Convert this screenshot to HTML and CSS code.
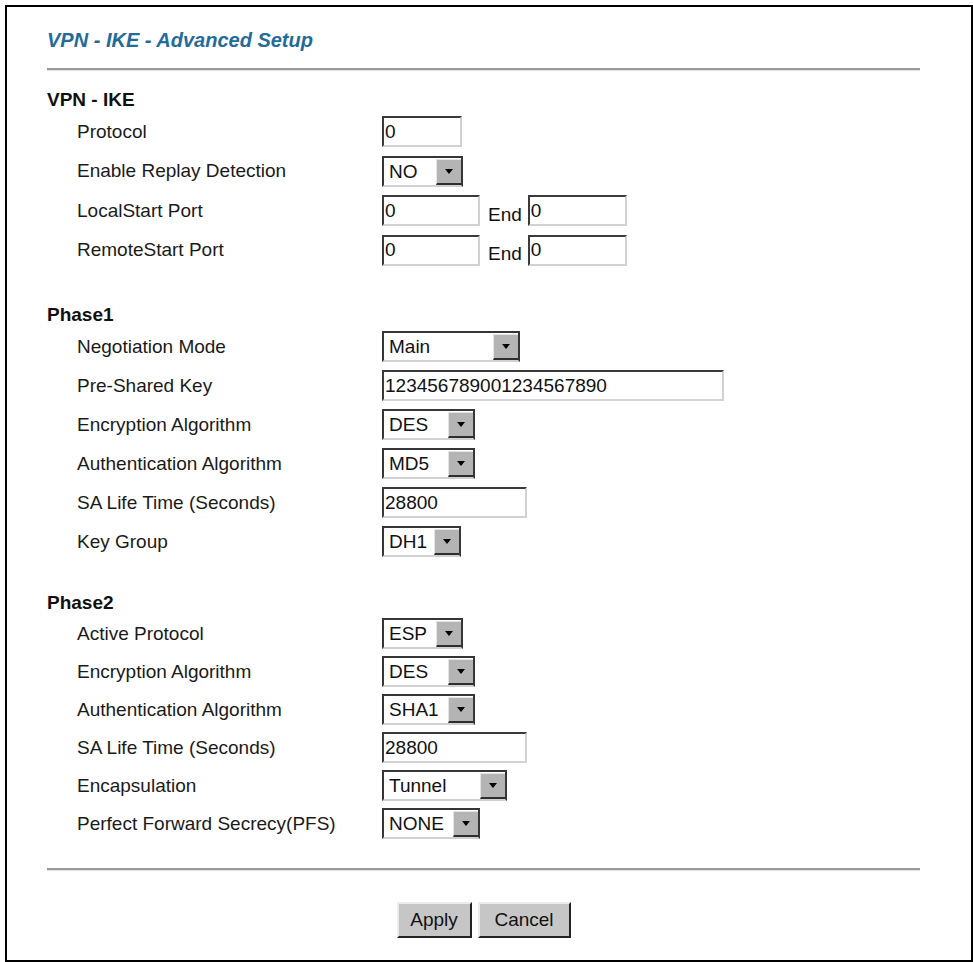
FILE: index.html
```html
<!DOCTYPE html>
<html lang="en">
<head>
<meta charset="UTF-8" />
<title>VPN - IKE - Advanced Setup</title>
<link rel="stylesheet" href="styles.css">
</head>
<body>
<div class="panel">
  <div class="title">VPN - IKE - Advanced Setup</div>
  <div class="rule"></div>

  <div class="section sec-ike">
    <div class="sec-head">VPN - IKE</div>
    <div class="row">
      <label>Protocol</label>
      <input class="txt" style="width:80px" value="0" />
    </div>
    <div class="row">
      <label>Enable Replay Detection</label>
      <span class="dd" style="width:81px"><select><option>NO</option><option>YES</option></select><i class="dd-btn"></i></span>
    </div>
    <div class="row">
      <label>LocalStart Port</label>
      <input class="txt" style="width:98px" value="0" />
      <span class="end">End</span>
      <input class="txt" style="width:99px" value="0" />
    </div>
    <div class="row">
      <label>RemoteStart Port</label>
      <input class="txt" style="width:98px" value="0" />
      <span class="end">End</span>
      <input class="txt" style="width:99px" value="0" />
    </div>
  </div>

  <div class="section sec-p1">
    <div class="sec-head">Phase1</div>
    <div class="row">
      <label>Negotiation Mode</label>
      <span class="dd" style="width:138px"><select><option>Main</option><option>Aggressive</option></select><i class="dd-btn"></i></span>
    </div>
    <div class="row">
      <label>Pre-Shared Key</label>
      <input class="txt" style="width:342px" value="123456789001234567890" />
    </div>
    <div class="row">
      <label>Encryption Algorithm</label>
      <span class="dd" style="width:93px"><select><option>DES</option><option>3DES</option></select><i class="dd-btn"></i></span>
    </div>
    <div class="row">
      <label>Authentication Algorithm</label>
      <span class="dd" style="width:93px"><select><option>MD5</option><option>SHA1</option></select><i class="dd-btn"></i></span>
    </div>
    <div class="row">
      <label>SA Life Time (Seconds)</label>
      <input class="txt" style="width:145px" value="28800" />
    </div>
    <div class="row">
      <label>Key Group</label>
      <span class="dd" style="width:79px"><select><option>DH1</option><option>DH2</option></select><i class="dd-btn"></i></span>
    </div>
  </div>

  <div class="section sec-p2">
    <div class="sec-head">Phase2</div>
    <div class="row">
      <label>Active Protocol</label>
      <span class="dd" style="width:81px"><select><option>ESP</option><option>AH</option></select><i class="dd-btn"></i></span>
    </div>
    <div class="row">
      <label>Encryption Algorithm</label>
      <span class="dd" style="width:93px"><select><option>DES</option><option>3DES</option></select><i class="dd-btn"></i></span>
    </div>
    <div class="row">
      <label>Authentication Algorithm</label>
      <span class="dd" style="width:93px"><select><option>SHA1</option><option>MD5</option></select><i class="dd-btn"></i></span>
    </div>
    <div class="row">
      <label>SA Life Time (Seconds)</label>
      <input class="txt" style="width:145px" value="28800" />
    </div>
    <div class="row">
      <label>Encapsulation</label>
      <span class="dd" style="width:125px"><select><option>Tunnel</option><option>Transport</option></select><i class="dd-btn"></i></span>
    </div>
    <div class="row">
      <label>Perfect Forward Secrecy(PFS)</label>
      <span class="dd" style="width:98px"><select><option>NONE</option><option>DH1</option><option>DH2</option></select><i class="dd-btn"></i></span>
    </div>
  </div>

  <div class="rule rule-bottom"></div>
  <div class="buttons">
    <button type="submit" class="btn-apply">Apply</button>
    <button type="reset" class="btn-cancel">Cancel</button>
  </div>
</div>
</body>
</html>
```

FILE: styles.css
```css
body {
  margin: 0;
  background: #fff;
  font-family: 'Liberation Sans', Arial, Helvetica, sans-serif;
  color: #111;
}
.panel {
  box-sizing: border-box;
  width: 968px;
  height: 957px;
  margin: 5px 0 0 5px;
  border: 2px solid #000;
  padding: 21px 51px 0 40px;
}
.title {
  font-size: 20px;
  line-height: 24px;
  font-weight: bold;
  font-style: italic;
  color: #236b98;
}
.rule {
  margin-top: 16px;
  border-top: 2px solid #9a9a9a;
  border-bottom: 1px solid #e2e2e2;
}
.rule-bottom {
  margin-top: 25.5px;
}
.section {
  display: flex;
  flex-direction: column;
}
.sec-ike { margin-top: 17px; }
.sec-p1 { margin-top: 33px; }
.sec-p2 { margin-top: 29.5px; }
.sec-head {
  font-size: 19px;
  line-height: 24px;
  font-weight: bold;
}
.row {
  display: flex;
  align-items: center;
  padding-left: 30px;
  height: 39px;
}
.sec-ike .row { height: 39.5px; }
.sec-p2 .row { height: 38px; }
.row label {
  width: 305px;
  flex-shrink: 0;
  font-size: 19px;
  color: #1a1a1a;
}
.txt {
  box-sizing: border-box;
  height: 31px;
  margin: 0;
  padding: 0 0 0 1px;
  border: 2px solid;
  border-color: #3a3a3a #d2d2d2 #d2d2d2 #3a3a3a;
  font-family: inherit;
  font-size: 19px;
  color: #111;
  background: #fff;
  outline: none;
}
.end {
  font-size: 19px;
  line-height: 22px;
  align-self: flex-end;
  margin: 0 6px 5px 8px;
}
.dd {
  box-sizing: border-box;
  display: inline-flex;
  height: 31px;
  border: 2px solid;
  border-color: #363636 #363636 #d0d0d0 #363636;
  background: #fff;
}
.dd select {
  appearance: none;
  -webkit-appearance: none;
  flex: 1;
  min-width: 0;
  height: 100%;
  border: 0;
  margin: 0;
  padding: 0 0 0 5px;
  background: transparent;
  font-family: inherit;
  font-size: 19px;
  color: #111;
  outline: none;
}
.dd-btn {
  box-sizing: border-box;
  width: 25px;
  flex-shrink: 0;
  margin-top: 1px;
  background: #b4b4b4;
  border-top: 1px solid #e4e4e4;
  border-left: 1px solid #e4e4e4;
  border-bottom: 2px solid #2e2e2e;
  display: flex;
  align-items: center;
  justify-content: center;
}
.dd-btn::after {
  content: "";
  border-left: 4px solid transparent;
  border-right: 4px solid transparent;
  border-top: 5px solid #000;
}
.buttons {
  margin-top: 31px;
  display: flex;
  justify-content: center;
  gap: 6px;
}
.buttons button {
  box-sizing: border-box;
  height: 36px;
  padding: 0;
  background: #c6c6c6;
  border: 2px solid;
  border-color: #ececec #222 #222 #ececec;
  font-family: inherit;
  font-size: 19px;
  color: #111;
}
.btn-apply { width: 75px; }
.btn-cancel { width: 93px; }
```
